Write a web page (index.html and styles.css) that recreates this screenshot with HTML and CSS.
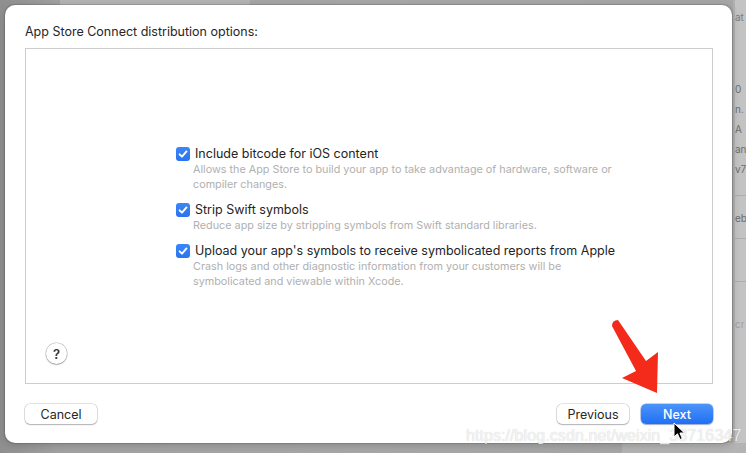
FILE: index.html
```html
<!DOCTYPE html>
<html>
<head>
<meta charset="utf-8">
<link rel="stylesheet" href="styles.css">
</head>
<body>
<div class="desktop">
  <div class="topstrip"></div>
  <div class="bgapp">
    <div class="bg-line l1">at</div>
    <div class="bg-line l2">0</div>
    <div class="bg-line">n.</div>
    <div class="bg-line">A</div>
    <div class="bg-line">an</div>
    <div class="bg-line">v7</div>
    <div class="bg-sep s1"></div>
    <div class="bg-line l7">eb</div>
    <div class="bg-sep s2"></div>
    <div class="bg-sep s3"></div>
    <div class="bg-line l8">cr</div>
  </div>
  <div class="bottomstrip"></div>

  <div class="dialog">
    <div class="title">App Store Connect distribution options:</div>
    <div class="panel">
      <div class="options">
        <div class="option">
          <div class="opt-head"><span class="check"><svg viewBox="0 0 14 14" width="14" height="14"><path d="M3.6 7.3 L6 9.7 L10.5 4.4" fill="none" stroke="#fff" stroke-width="1.9" stroke-linecap="round" stroke-linejoin="round"/></svg></span><span class="opt-label">Include bitcode for iOS content</span></div>
          <div class="opt-desc">Allows the App Store to build your app to take advantage of hardware, software or<br>compiler changes.</div>
        </div>
        <div class="option">
          <div class="opt-head"><span class="check"><svg viewBox="0 0 14 14" width="14" height="14"><path d="M3.6 7.3 L6 9.7 L10.5 4.4" fill="none" stroke="#fff" stroke-width="1.9" stroke-linecap="round" stroke-linejoin="round"/></svg></span><span class="opt-label">Strip Swift symbols</span></div>
          <div class="opt-desc">Reduce app size by stripping symbols from Swift standard libraries.</div>
        </div>
        <div class="option">
          <div class="opt-head"><span class="check"><svg viewBox="0 0 14 14" width="14" height="14"><path d="M3.6 7.3 L6 9.7 L10.5 4.4" fill="none" stroke="#fff" stroke-width="1.9" stroke-linecap="round" stroke-linejoin="round"/></svg></span><span class="opt-label">Upload your app's symbols to receive symbolicated reports from Apple</span></div>
          <div class="opt-desc">Crash logs and other diagnostic information from your customers will be<br>symbolicated and viewable within Xcode.</div>
        </div>
      </div>
      <div class="help">?</div>
    </div>
    <div class="buttons">
      <div class="btn">Cancel</div>
      <div class="spacer"></div>
      <div class="btn prev">Previous</div>
      <div class="btn primary">Next</div>
    </div>
  </div>

  <svg class="arrow" width="746" height="453" viewBox="0 0 746 453">
    <path d="M612 326 Q612 320 618 320 L646 361 L658 352 L657 393 L622 378 L636 371 Z" fill="#f42a1b"/>
  </svg>
  <div class="watermark">https://blog.csdn.net/weixin_38716347</div>
  <svg class="cursor" width="14" height="20" viewBox="0 0 14 20">
    <path d="M1 1 L1 15 L4.5 11.8 L7 17.5 L9.3 16.5 L6.9 11 L11.5 11 Z" fill="#000" stroke="#fff" stroke-width="1"/>
  </svg>
</div>
</body>
</html>
```

FILE: styles.css
```css
* { box-sizing: border-box; }
html, body { margin: 0; padding: 0; }
body {
  width: 746px;
  height: 453px;
  overflow: hidden;
  font-family: Inter, "Noto Sans", "Liberation Sans", sans-serif;
}
.desktop {
  position: relative;
  width: 746px;
  height: 453px;
  background: linear-gradient(90deg, #8f8f8f 0px, #a2a2a2 60px, #a8a8a8 400px, #a6a6a6 733px);
  overflow: hidden;
}
.topstrip {
  position: absolute;
  left: 60px; top: 0;
  width: 190px; height: 5px;
  background: #b4b4b4;
}
.bottomstrip {
  position: absolute;
  left: 622px; top: 443px;
  width: 124px; height: 10px;
  background: #b3b3b3;
}
.bgapp {
  position: absolute;
  left: 733px; top: 0;
  width: 13px; height: 453px;
  background: #c3c3c3;
  border-left: 2px solid #b0b0b0;
  overflow: hidden;
  white-space: nowrap;
  font-size: 10px;
  color: #6d6d6d;
}
.bg-line { line-height: 20px; height: 20px; padding-left: 0; }
.l1 { margin-top: 7px; color: #7a7a7a; }
.l2 { margin-top: 52px; }
.bg-sep { height: 1px; background: #adadad; }
.s1 { margin-top: 16px; }
.l7 { margin-top: 12px; }
.s2 { margin-top: 10px; }
.s3 { margin-top: 42px; }
.l8 { margin-top: 32px; color: #a0a0a0; }

.dialog {
  position: absolute;
  left: 5px; top: 5px;
  width: 727px; height: 438px;
  background: #ffffff;
  border-radius: 10px;
  box-shadow: 0 0 0 1px rgba(0,0,0,0.12), 0 2px 8px rgba(0,0,0,0.2);
  padding: 19px 19px 19px 20px;
  display: flex;
  flex-direction: column;
}
.title {
  font-size: 12.5px;
  line-height: 16px;
  color: #262626;
  height: 16px;
}
.panel {
  position: relative;
  margin-top: 8px;
  height: 336px;
  border: 1px solid #cdcdcd;
  display: flex;
  align-items: center;
  padding-left: 150px;
}
.options {
  display: flex;
  flex-direction: column;
  gap: 10px;
  margin-top: 2px;
}
.opt-head {
  display: flex;
  align-items: center;
  height: 16px;
}
.check {
  width: 14px; height: 14px;
  border-radius: 3px;
  background: linear-gradient(#3b87f8, #2a74ef);
  display: inline-flex;
  margin-right: 5px;
}
.check svg { display: block; }
.opt-label {
  font-size: 12.5px;
  color: #242424;
  line-height: 16px;
}
.opt-desc {
  font-size: 10.8px;
  line-height: 15px;
  color: #b0b0b0;
  padding-left: 17px;
}
.help {
  position: absolute;
  left: 20px; bottom: 19px;
  width: 21px; height: 21px;
  border-radius: 50%;
  background: #fff;
  box-shadow: 0 0 0 0.5px rgba(0,0,0,0.25), 0 1px 1.5px rgba(0,0,0,0.25);
  font-size: 13px;
  font-weight: 600;
  color: #333;
  display: flex;
  align-items: center;
  justify-content: center;
}
.buttons {
  margin-top: 20px;
  display: flex;
  height: 20px;
  gap: 12px;
}
.spacer { flex: 1; }
.btn {
  width: 72px;
  height: 20px;
  border-radius: 5px;
  background: #fff;
  box-shadow: 0 0 0 0.5px rgba(0,0,0,0.22), 0 1px 1.5px rgba(0,0,0,0.22);
  font-size: 12.5px;
  color: #262626;
  display: flex;
  align-items: center;
  justify-content: center;
}
.primary {
  background: linear-gradient(#4c93f9, #2170f4);
  color: #fff;
  font-weight: 500;
  box-shadow: 0 0 0 0.5px rgba(20,80,200,0.5), 0 1px 1.5px rgba(0,0,0,0.2);
}
.arrow {
  position: absolute;
  left: 0; top: 0;
}
.watermark {
  position: absolute;
  left: 466px; top: 425px;
  font-family: "Liberation Sans", Arial, sans-serif;
  font-size: 16.2px;
  line-height: 20px;
  color: rgba(250,250,250,0.85);
  text-shadow: 0 0 1px rgba(0,0,0,0.22);
  white-space: nowrap;
}
.cursor {
  position: absolute;
  left: 673px; top: 422px;
}
```
